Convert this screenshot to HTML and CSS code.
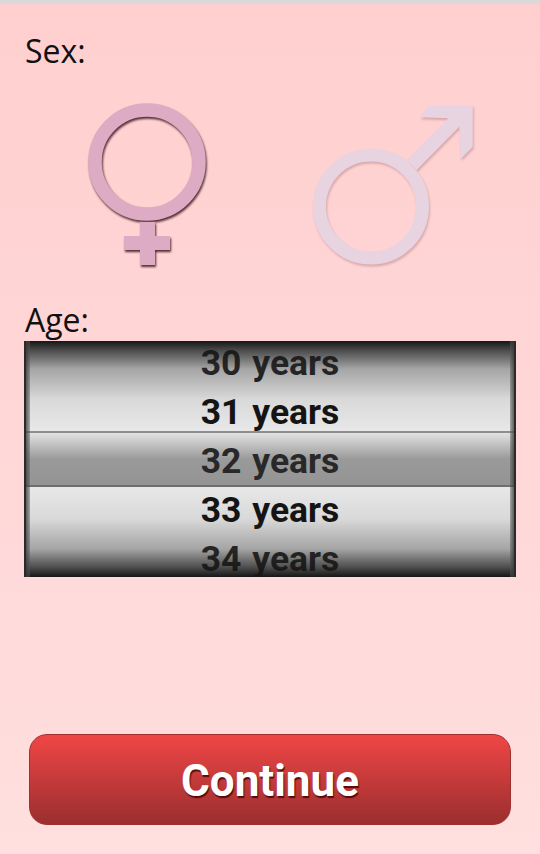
FILE: index.html
```html
<!DOCTYPE html>
<html lang="en">
<head>
    <meta charset="UTF-8">
    <meta name="viewport" content="width=device-width, initial-scale=1.0">
    <title>Sex and Age</title>
    <link rel="stylesheet" href="styles.css">
</head>
<body>
    <div class="screen">
        <h2 class="field-label sex-label">Sex:</h2>
        <div class="sex-row">
            <svg class="sex-icon female" width="240" height="170" viewBox="0 0 240 170">
                <path d="M57 119 H72 V133 H87 V147 H72 V162 H57 V147 H41 V133 H57 Z"/>
                <circle class="ring" cx="64" cy="59" r="52"/>
            </svg>
            <svg class="sex-icon male" width="240" height="170" viewBox="0 0 240 170">
                <path d="M146 14.3 L154.3 3 L198.7 2 V43.7 L186.7 56 L185.3 23.7 L142.7 67 L132.7 57 L174.3 15.3 Z"/>
                <circle class="ring" cx="97" cy="103.5" r="51.5"/>
            </svg>
        </div>
        <h2 class="field-label age-label">Age:</h2>
        <div class="wheel">
            <div class="wheel-band"></div>
            <div class="wheel-items">
                <div class="wheel-item">30 years</div>
                <div class="wheel-item">31 years</div>
                <div class="wheel-item selected">32 years</div>
                <div class="wheel-item">33 years</div>
                <div class="wheel-item">34 years</div>
            </div>
            <div class="wheel-shade"></div>
        </div>
        <div class="footer">
            <button class="continue-button">Continue</button>
        </div>
    </div>
</body>
</html>
```
FILE: styles.css
```css
* {
    box-sizing: border-box;
}
html, body {
    height: 100%;
}
body {
    margin: 0;
    font-family: "Open Sans", "Liberation Sans", sans-serif;
    color: #111;
    background: linear-gradient(to bottom, #ffcfcf, #ffdfdf);
    overflow: hidden;
}
.screen {
    height: 854px;
    border-top: 4px solid #d9d9d9;
    padding: 0 24px;
    display: flex;
    flex-direction: column;
}
.field-label {
    margin: 0;
    padding-left: 1px;
    font-size: 32px;
    font-weight: 400;
    line-height: 38px;
}
.sex-label {
    margin-top: 28px;
}
.sex-row {
    margin-top: 33px;
    height: 170px;
    display: flex;
    margin-left: 59px;
}
.sex-icon {
    flex: none;
    overflow: visible;
}
.male {
    margin-left: -49px;
}
.sex-icon path {
    stroke: none;
}
.sex-icon .ring {
    fill: none;
    stroke-width: 13.5;
}
.female path {
    fill: #deabc4;
}
.female .ring {
    stroke: #deabc4;
}
.female {
    filter: drop-shadow(1px 2px 1px rgba(50, 15, 25, 0.85));
}
.male path {
    fill: #e8d3e0;
}
.male .ring {
    stroke: #e8d3e0;
    stroke-width: 13;
}
.male {
    filter: drop-shadow(1px 2px 1px rgba(120, 70, 80, 0.3));
}
.age-label {
    margin-top: 28px;
    height: 40px;
}
.wheel {
    position: relative;
    height: 236px;
    overflow: hidden;
    background: linear-gradient(to bottom, #bdbdbd, #e8e8e8 38%, #e8e8e8 62%, #bdbdbd);
    border-left: 2px solid #2a2a2a;
    border-right: 2px solid #2a2a2a;
}
.wheel-items {
    position: relative;
    height: 100%;
    display: flex;
    flex-direction: column;
    gap: 9px;
    align-items: center;
    justify-content: center;
}
.wheel-item {
    flex: none;
    height: 40px;
    line-height: 45px;
    font-family: Roboto, sans-serif;
    font-size: 35.5px;
    font-weight: 700;
    word-spacing: 2px;
    color: #141414;
}
.wheel-item.selected {
    color: #282828;
}
.wheel-band {
    position: absolute;
    left: 0;
    right: 0;
    top: 90px;
    height: 56px;
    border-top: 2px solid #8e8e8e;
    border-bottom: 2px solid #6e6e6e;
    background: linear-gradient(to bottom, #e2e2e2, #9a9a9a 50%, #949494);
}
.wheel-shade {
    position: absolute;
    inset: 0;
    pointer-events: none;
    background:
        linear-gradient(to right, rgba(60, 60, 60, 0.8), rgba(90, 90, 90, 0.45) 4px, transparent 4.5px, transparent calc(100% - 4.5px), rgba(90, 90, 90, 0.45) calc(100% - 4px), rgba(60, 60, 60, 0.8)),
        linear-gradient(to bottom, #161616, rgba(30, 30, 30, 0.7) 10px, rgba(80, 80, 80, 0.3) 28px, transparent 58px, transparent calc(100% - 58px), rgba(80, 80, 80, 0.3) calc(100% - 28px), rgba(30, 30, 30, 0.7) calc(100% - 10px), #161616);
}
.footer {
    margin-top: 157px;
    padding: 0 5px;
}
.continue-button {
    display: block;
    width: 100%;
    height: 91px;
    padding-top: 4px;
    border: 1px solid #a03030;
    border-radius: 18px;
    background: linear-gradient(to bottom, #f04646, #9b2e2e);
    color: #fff;
    font-family: Roboto, sans-serif;
    font-size: 44px;
    font-weight: 700;
    text-shadow: 1px 2px 1px rgba(60, 0, 0, 0.8);
}
```
